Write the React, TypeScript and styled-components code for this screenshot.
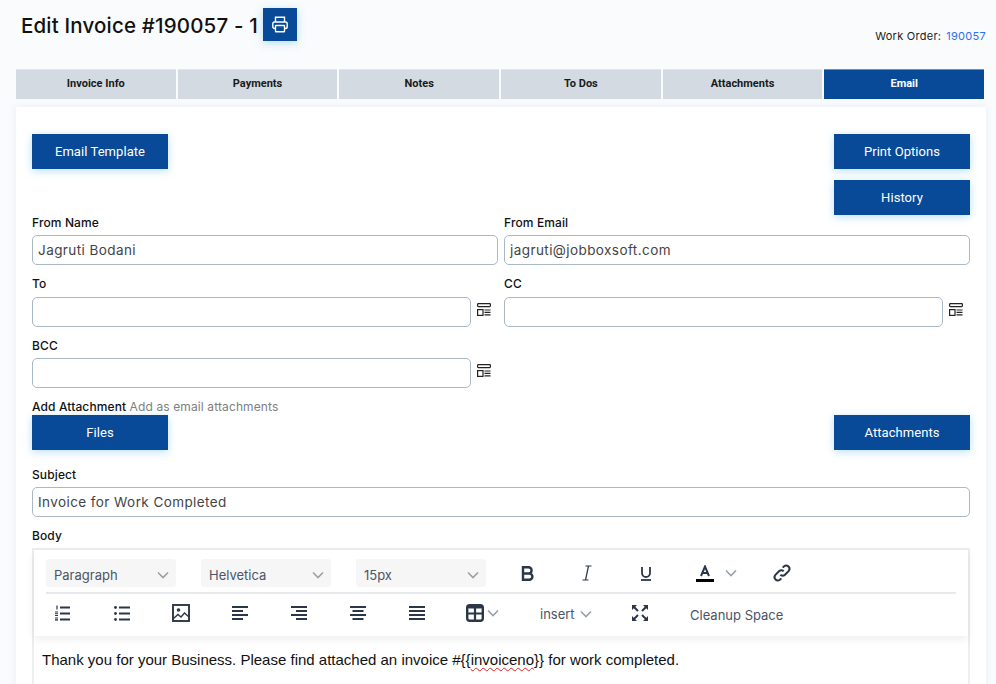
import React from "react";
import styled, { createGlobalStyle } from "styled-components";

const Global = createGlobalStyle`
  html, body { margin: 0; padding: 0; height: 684px; overflow: hidden; background: #f9fbfd; }
  * { box-sizing: border-box; }
  body { font-family: "Inter", "Open Sans", sans-serif; }
`;
const Page = styled.div`width: 996px; height: 684px; overflow: hidden; padding: 8px 10px 0 16px;`;
const Header = styled.header`display: flex; justify-content: space-between; height: 61px;`;
const TitleWrap = styled.div`display: flex; align-items: flex-start; padding-left: 5px;`;
const Title = styled.h1`margin: 1px 5px 0 0; font: 500 20.5px/34px "Inter", sans-serif; letter-spacing: .17px; color: #111;`;
const IconButton = styled.button`width: 34px; height: 33px; border: 0; padding: 0; background: #084a97; color: #fff; display: flex; align-items: center; justify-content: center; box-shadow: 0 2px 8px rgba(60,170,230,.35);`;
const WorkOrder = styled.div`font: 400 11px/14px "Inter", sans-serif; letter-spacing: .27px; color: #222; margin-top: 21px; display: flex; gap: 5px;`;
const WorkLink = styled.a`color: #2f6fed;`;
const Tabs = styled.nav`display: flex; gap: 2px; width: 968px; height: 30px;`;
const Tab = styled.div<{ $active?: boolean }>`
  flex: 1; display: flex; align-items: center; justify-content: center; padding-bottom: 2px;
  font: 700 11px "Roboto", sans-serif;
  background: ${(p) => (p.$active ? "#084a97" : "#d3dae2")};
  color: ${(p) => (p.$active ? "#fff" : "#1a1a1a")};
  border-top: 1px solid ${(p) => (p.$active ? "#6b8fb8" : "#dfe5ea")};
`;
const Card = styled.main`margin-top: 8px; width: 970px; height: 600px; background: #fff; padding: 27px 16px 0; box-shadow: 0 0 8px rgba(120,140,170,.12);`;
const ButtonRow = styled.div<{ $h?: number }>`display: flex; justify-content: space-between; align-items: flex-start; height: ${(p) => p.$h ?? 35}px;`;
const ActionButton = styled.button`width: 136px; height: 35px; border: 0; background: #084a97; color: #fff; font: 400 13px "Roboto", sans-serif; letter-spacing: .06px; box-shadow: 0 2px 8px rgba(60,170,230,.35);`;
const RightStack = styled.div`display: flex; flex-direction: column; gap: 11px;`;
const FieldGrid = styled.div`display: grid; grid-template-columns: 1fr 1fr; column-gap: 6px;`;
const Field = styled.div<{ $h?: number }>`height: ${(p) => p.$h ?? 61}px;`;
const Label = styled.label<{ $h?: number }>`display: block; font: 500 12px/14px "Inter", sans-serif; letter-spacing: .12px; color: #111; height: ${(p) => p.$h ?? 20}px; padding-top: 1px;`;
const InputRow = styled.div`display: flex; align-items: center; gap: 6px;`;
const Input = styled.div`flex: 1; height: 30px; border: 1px solid #aab8c4; border-radius: 5px; background: #fff; padding: 0 5px; font: 400 13.5px/28px "Inter", sans-serif; color: #444; letter-spacing: .42px;`;
const Tool = styled.span`width: 14px; margin: 0 7px 6px 0; display: flex; color: #222;`;
const Hint = styled.span`color: #808080; font-weight: 400;`;
const AttachLabel = styled.div`font: 500 12px/14px "Inter", sans-serif; letter-spacing: .12px; color: #111; height: 15px; margin-top: 1px;`;
const Editor = styled.section`height: 200px; border: 2px solid #eee; border-bottom: 0; position: relative;`;
const Toolbar = styled.div`height: 86px; padding: 0 12px; box-shadow: 0 3px 8px rgba(100,110,130,.12);`;
const ToolRow = styled.div<{ $top?: boolean }>`
  display: flex; gap: 25px; align-items: center;
  ${(p) => p.$top
    ? `padding-top: 9px; border-bottom: 2px solid #e7e9ec; height: 44px; align-items: flex-start;`
    : `height: 42px; padding-bottom: 4px;`}
`;
const Select = styled.div`width: 130px; height: 28px; background: #f6f6f6; border-radius: 3px; display: flex; align-items: center; justify-content: space-between; padding: 3px 7px 0 8px; font: 400 13px "Inter", sans-serif; color: #4a5568;`;
const TBtn = styled.span<{ $w?: number }>`width: ${(p) => p.$w ?? 34}px; height: 28px; display: flex; align-items: center; justify-content: center; color: #2b3648; flex: none;`;
const GroupBtn = styled(TBtn)<{ $gap: number; $pad: number }>`justify-content: flex-start; gap: ${(p) => p.$gap}px; padding-left: ${(p) => p.$pad}px;`;
const TextTool = styled.span<{ $w?: number }>`width: ${(p) => p.$w ?? 110}px; padding: 2px 0 0 10px; font: 400 13px "Inter", sans-serif; color: #4a5568; flex: none; display: flex; gap: 5px; align-items: center; white-space: nowrap;`;
const CleanupTool = styled(TextTool)`padding-left: 8px; padding-top: 4px;`;
const Body = styled.p`margin: 14px 0 0 8px; font: 400 15px/20px "Liberation Sans", Arial, sans-serif; color: #111;`;
const Misspelt = styled.span`text-decoration: underline wavy #e02020 1px; text-underline-offset: 2px;`;

const Chevron = ({ c = "#9aa0a8" }: { c?: string }) => (
  <svg width="12" height="8" viewBox="0 0 12 8" fill="none" stroke={c} strokeWidth="1.6"><path d="M1 1.5l5 5 5-5" /></svg>
);
const S = ({ children, w = 18, h = 18 }: { children: React.ReactNode; w?: number; h?: number }) => (
  <svg width={w} height={h} viewBox="0 0 18 18" fill="none" stroke="currentColor" strokeWidth="1.7">{children}</svg>
);
const PrintIcon = () => (
  <svg width="16" height="17" viewBox="0 0 16 17" fill="none" stroke="#fff" strokeWidth="1.4">
    <path d="M3.5 6V1.2h9V6" /><rect x=".8" y="6" width="14.4" height="6.5" rx="1.8" /><rect x="3.5" y="9.5" width="9" height="6.3" rx=".5" fill="#084a97" />
  </svg>
);
const ListTool = () => (
  <svg width="14" height="13" viewBox="0 0 14 13" fill="none" stroke="currentColor" strokeWidth="1.2">
    <rect x=".6" y=".6" width="12.8" height="3" rx=".8" /><rect x=".6" y="6.6" width="5.4" height="5.8" /><path d="M7.5 7h6M7.5 9.4h6M7.5 11.8h6" />
  </svg>
);
const Ordered = () => (
  <svg width="16" height="16" viewBox="0 0 16 16" fill="currentColor">
    <rect x="5" y="1.5" width="10" height="2" /><rect x="5" y="7.5" width="10" height="2" /><rect x="5" y="13.5" width="10" height="2" />
    <rect x="1.4" y="0.5" width="1.2" height="4" /><rect x="0" y="6.5" width="3" height="1" /><rect x="0" y="8.2" width="3" height="1" /><rect x="0" y="10" width="3" height="1" /><rect x="0" y="12.5" width="3" height="1" /><rect x="0" y="14.2" width="3" height="1" /><rect x="0" y="15.5" width="3" height="1" />
  </svg>
);
const Unordered = () => (
  <svg width="16" height="16" viewBox="0 0 16 16" fill="currentColor">
    <rect x="5" y="1.5" width="11" height="2" /><rect x="5" y="7.5" width="11" height="2" /><rect x="5" y="13.5" width="11" height="2" />
    <circle cx="1.5" cy="2.5" r="1.4" /><circle cx="1.5" cy="8.5" r="1.4" /><circle cx="1.5" cy="14.5" r="1.4" />
  </svg>
);
const ImageIcon = () => (
  <S><rect x="1" y="1" width="16" height="16" strokeWidth="1.9" /><circle cx="6.5" cy="6" r="1.8" fill="currentColor" stroke="none" /><path d="M1.5 14.5l4.5-4 3 2.5 3.5-4 4.5 4" strokeWidth="1.4" /></S>
);
const Align = ({ rows }: { rows: [number, number][] }) => (
  <svg width="16" height="14" viewBox="0 0 16 14" fill="currentColor">
    {rows.map(([x, w], i) => <rect key={i} x={x} y={i * 4} width={w} height="2" />)}
  </svg>
);
const TableIcon = () => (
  <S><rect x="1.2" y="1.2" width="15.6" height="15.6" rx="2.5" strokeWidth="2.4" /><path d="M1 9.5h16M9 1v16" strokeWidth="2.2" /><rect x="1" y="1" width="16" height="3.5" rx="2" fill="currentColor" stroke="none" /></S>
);
const Expand = () => (
  <svg width="16" height="16" viewBox="0 0 16 16" fill="currentColor">
    <path d="M0 0h5L0 5zM16 0v5L11 0zM0 16v-5l5 5zM16 16h-5l5-5z" />
    <path d="M2 2l4 4M14 2l-4 4M2 14l4-4M14 14l-4-4" strokeWidth="2" stroke="currentColor" fill="none" />
  </svg>
);
const Bold = () => (
  <svg width="14" height="15" viewBox="0 0 14 15" fill="none" stroke="currentColor" strokeWidth="2.4"><path d="M2 1.3h5.5a3 3 0 010 6.2H2zM2 7.5h6.3a3 3 0 010 6.2H2z" /></svg>
);
const Italic = () => (
  <svg width="12" height="16" viewBox="0 0 12 16" fill="none" stroke="currentColor" strokeWidth="1.2"><path d="M4.5 1h6M1.5 15h6M7.5 1l-3 14" /></svg>
);
const Underline = () => (
  <svg width="12" height="15" viewBox="0 0 12 15" fill="none" stroke="currentColor" strokeWidth="1.8"><path d="M2 1v6a4 4 0 008 0V1" /><path d="M1 14h10" /></svg>
);
const FontColor = () => (
  <svg width="18" height="17" viewBox="0 0 18 17" fill="none"><path d="M5 11l4-9.5 4 9.5M6.4 8h5.2" stroke="currentColor" strokeWidth="2" /><rect x="0" y="14" width="18" height="3" fill="#000" /></svg>
);
const LinkIcon = () => (
  <svg width="20" height="20" viewBox="0 0 18 18" fill="none" stroke="currentColor" strokeWidth="1.8"><path d="M7.5 10.5a3 3 0 004.2 0l3.4-3.4a3 3 0 00-4.2-4.2L9.6 4.2" /><path d="M10.5 7.5a3 3 0 00-4.2 0l-3.4 3.4a3 3 0 004.2 4.2l1.3-1.3" /></svg>
);

export default function App() {
  return (
    <Page>
      <Global />
      <Header>
        <TitleWrap>
          <Title>Edit Invoice #190057 - 1</Title>
          <IconButton aria-label="Print"><PrintIcon /></IconButton>
        </TitleWrap>
        <WorkOrder>Work Order: <WorkLink>190057</WorkLink></WorkOrder>
      </Header>
      <Tabs>
        {["Invoice Info", "Payments", "Notes", "To Dos", "Attachments"].map((t) => <Tab key={t}>{t}</Tab>)}
        <Tab $active>Email</Tab>
      </Tabs>
      <Card>
        <ButtonRow $h={81}>
          <ActionButton>Email Template</ActionButton>
          <RightStack>
            <ActionButton>Print Options</ActionButton>
            <ActionButton>History</ActionButton>
          </RightStack>
        </ButtonRow>
        <FieldGrid>
          <Field>
            <Label>From Name</Label>
            <InputRow><Input>Jagruti Bodani</Input></InputRow>
          </Field>
          <Field>
            <Label>From Email</Label>
            <InputRow><Input>jagruti@jobboxsoft.com</Input></InputRow>
          </Field>
          <Field $h={62}>
            <Label $h={21}>To</Label>
            <InputRow><Input /><Tool><ListTool /></Tool></InputRow>
          </Field>
          <Field $h={62}>
            <Label $h={21}>CC</Label>
            <InputRow><Input /><Tool><ListTool /></Tool></InputRow>
          </Field>
          <Field>
            <Label>BCC</Label>
            <InputRow><Input /><Tool><ListTool /></Tool></InputRow>
          </Field>
        </FieldGrid>
        <AttachLabel>Add Attachment <Hint>Add as email attachments</Hint></AttachLabel>
        <ButtonRow $h={52}>
          <ActionButton>Files</ActionButton>
          <ActionButton>Attachments</ActionButton>
        </ButtonRow>
        <Field $h={61}>
          <Label>Subject</Label>
          <Input>Invoice for Work Completed</Input>
        </Field>
        <Label $h={20}>Body</Label>
        <Editor>
          <Toolbar>
            <ToolRow $top>
              <Select>Paragraph<Chevron /></Select>
              <Select>Helvetica<Chevron /></Select>
              <Select>15px<Chevron /></Select>
              <TBtn><Bold /></TBtn>
              <TBtn><Italic /></TBtn>
              <TBtn><Underline /></TBtn>
              <GroupBtn $w={52} $gap={11} $pad={8}><FontColor /><Chevron /></GroupBtn>
              <TBtn><LinkIcon /></TBtn>
            </ToolRow>
            <ToolRow>
              <TBtn><Ordered /></TBtn>
              <TBtn><Unordered /></TBtn>
              <TBtn><ImageIcon /></TBtn>
              <TBtn><Align rows={[[0, 16], [0, 11], [0, 16], [0, 11]]} /></TBtn>
              <TBtn><Align rows={[[0, 16], [5, 11], [0, 16], [5, 11]]} /></TBtn>
              <TBtn><Align rows={[[0, 16], [2.5, 11], [0, 16], [2.5, 11]]} /></TBtn>
              <TBtn><Align rows={[[0, 16], [0, 16], [0, 16], [0, 16]]} /></TBtn>
              <GroupBtn $w={46} $gap={3} $pad={7}><TableIcon /><Chevron /></GroupBtn>
              <TextTool $w={68}>insert<Chevron /></TextTool>
              <TBtn><Expand /></TBtn>
              <CleanupTool>Cleanup Space</CleanupTool>
            </ToolRow>
          </Toolbar>
          <Body>Thank you for your Business. Please find attached an invoice #{"{{"}<Misspelt>invoiceno</Misspelt>{"}}"} for work completed.</Body>
        </Editor>
      </Card>
    </Page>
  );
}
